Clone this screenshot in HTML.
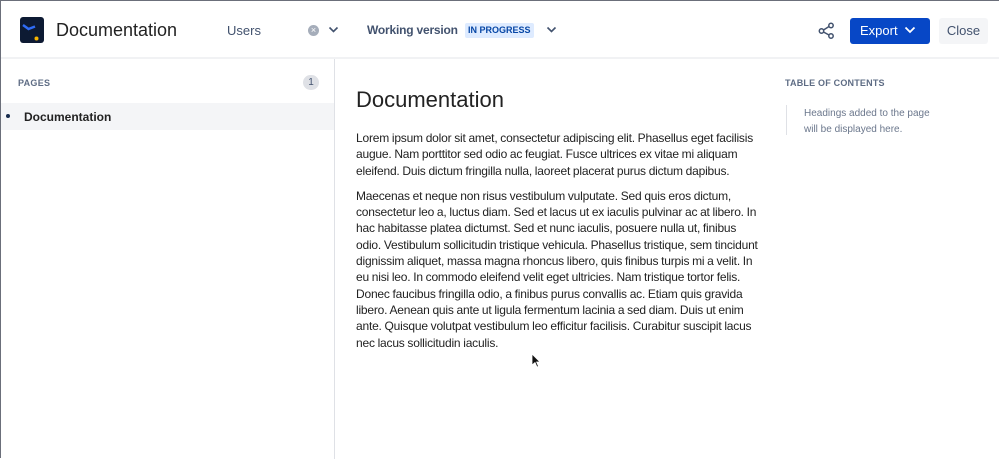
<!DOCTYPE html>
<html><head><style>
*{margin:0;padding:0;box-sizing:border-box}
body{width:999px;height:458px;overflow:hidden;background:#fff;font-family:"Liberation Sans",Arial,sans-serif;color:#172b4d;position:relative;border-top:1px solid #6b6f7a;border-left:1px solid #6b6f7a}
.abs{position:absolute}
.hdr{left:0;top:0;width:999px;height:58px;border-bottom:2px solid #f1f2f4}
.side{left:0;top:58px;width:334px;height:400px;border-right:1px solid #dfe1e6}
p{font-size:12px;line-height:16.3px;color:#222;margin-bottom:9px;letter-spacing:-0.2px;word-spacing:-0.3px}
</style></head><body>
<div class="abs hdr"></div>
<div class="abs" style="left:19px;top:16px;width:24px;height:26px;background:#0d1a33;border-radius:3px"></div>
<svg class="abs" style="left:19px;top:16px" width="24" height="26"><path d="M3 8 L8.5 12 L15 9.5" stroke="#2f6cf6" stroke-width="2.5" fill="none"/><circle cx="16.5" cy="21.5" r="2" fill="#f7b500"/></svg>
<div class="abs" style="left:55px;top:19px;font-size:18px;color:#222">Documentation</div>
<div class="abs" style="left:226px;top:22px;font-size:13px;color:#42526e">Users</div>
<div class="abs" style="left:307px;top:24px;width:11px;height:11px;border-radius:50%;background:#a5adba;color:#fff;font-size:9px;line-height:11px;text-align:center">×</div>
<svg class="abs" style="left:327px;top:25px" width="11" height="8"><path d="M1.5 1.5 L5.5 5.5 L9.5 1.5" stroke="#42526e" stroke-width="1.6" fill="none"/></svg>
<div class="abs" style="left:366px;top:22px;font-size:12px;font-weight:bold;color:#42526e;letter-spacing:-0.2px">Working version</div>
<div class="abs" style="left:464px;top:22px;height:15px;padding:0 3px;background:#deebff;color:#0747a6;font-size:9px;font-weight:bold;line-height:15px;border-radius:2px">IN PROGRESS</div>
<svg class="abs" style="left:545px;top:25px" width="11" height="8"><path d="M1.5 1.5 L5.5 5.5 L9.5 1.5" stroke="#42526e" stroke-width="1.6" fill="none"/></svg>
<svg class="abs" style="left:817px;top:21px" width="17" height="17"><circle cx="13" cy="3.5" r="2.2" stroke="#42526e" stroke-width="1.5" fill="none"/><circle cx="3.5" cy="9" r="2.2" stroke="#42526e" stroke-width="1.5" fill="none"/><circle cx="13" cy="14" r="2.2" stroke="#42526e" stroke-width="1.5" fill="none"/><path d="M5.5 8 L11 4.5 M5.5 10 L11 13" stroke="#42526e" stroke-width="1.5"/></svg>
<div class="abs" style="left:849px;top:17px;width:80px;height:26px;background:#0747c6;border-radius:3px;color:#fff;font-size:13px;line-height:26px;padding-left:10px">Export</div>
<svg class="abs" style="left:903px;top:25px" width="12" height="9"><path d="M1.5 1.5 L6 6 L10.5 1.5" stroke="#fff" stroke-width="1.8" fill="none"/></svg>
<div class="abs" style="left:938px;top:17px;width:49px;height:26px;background:#f4f5f7;border-radius:3px;color:#42526e;font-size:13px;line-height:26px;text-align:center">Close</div>
<div class="abs side"></div>
<div class="abs" style="left:17px;top:77px;font-size:9px;font-weight:bold;color:#5e6c84;letter-spacing:.3px">PAGES</div>
<div class="abs" style="left:302px;top:74px;width:16px;height:15px;border-radius:8px;background:#dfe1e6;font-size:10px;line-height:15px;text-align:center;color:#42526e">1</div>
<div class="abs" style="left:0;top:102px;width:333px;height:27px;background:#f4f5f7"></div>
<div class="abs" style="left:5px;top:113px;width:4px;height:4px;border-radius:50%;background:#172b4d"></div>
<div class="abs" style="left:23px;top:109px;font-size:12px;font-weight:bold;color:#222">Documentation</div>
<div class="abs" style="left:355px;top:86px;font-size:22px;color:#222">Documentation</div>
<div class="abs" style="left:355px;top:129px;width:410px">
<p>Lorem ipsum dolor sit amet, consectetur adipiscing elit. Phasellus eget facilisis augue. Nam porttitor sed odio ac feugiat. Fusce ultrices ex vitae mi aliquam eleifend. Duis dictum fringilla nulla, laoreet placerat purus dictum dapibus.</p>
<p>Maecenas et neque non risus vestibulum vulputate. Sed quis eros dictum,<br>consectetur leo a, luctus diam. Sed et lacus ut ex iaculis pulvinar ac at libero. In<br>hac habitasse platea dictumst. Sed et nunc iaculis, posuere nulla ut, finibus<br>odio. Vestibulum sollicitudin tristique vehicula. Phasellus tristique, sem tincidunt<br>dignissim aliquet, massa magna rhoncus libero, quis finibus turpis mi a velit. In<br>eu nisi leo. In commodo eleifend velit eget ultricies. Nam tristique tortor felis.<br>Donec faucibus fringilla odio, a finibus purus convallis ac. Etiam quis gravida<br>libero. Aenean quis ante ut ligula fermentum lacinia a sed diam. Duis ut enim<br>ante. Quisque volutpat vestibulum leo efficitur facilisis. Curabitur suscipit lacus<br>nec lacus sollicitudin iaculis.</p>
</div>
<div class="abs" style="left:784px;top:77px;font-size:9px;font-weight:bold;color:#5e6c84;letter-spacing:.2px">TABLE OF CONTENTS</div>
<div class="abs" style="left:785px;top:104px;width:1px;height:30px;background:#dfe1e6"></div>
<div class="abs" style="left:803px;top:105px;font-size:10px;line-height:16px;color:#6b778c">Headings added to the page<br>will be displayed here.</div>
<svg class="abs" style="left:530px;top:352px" width="10" height="16"><path d="M1 1 L1 12 L4 9.5 L6 14 L7.5 13.3 L5.6 9 L9 9 Z" fill="#111" stroke="#fff" stroke-width=".8"/></svg>
</body></html>
